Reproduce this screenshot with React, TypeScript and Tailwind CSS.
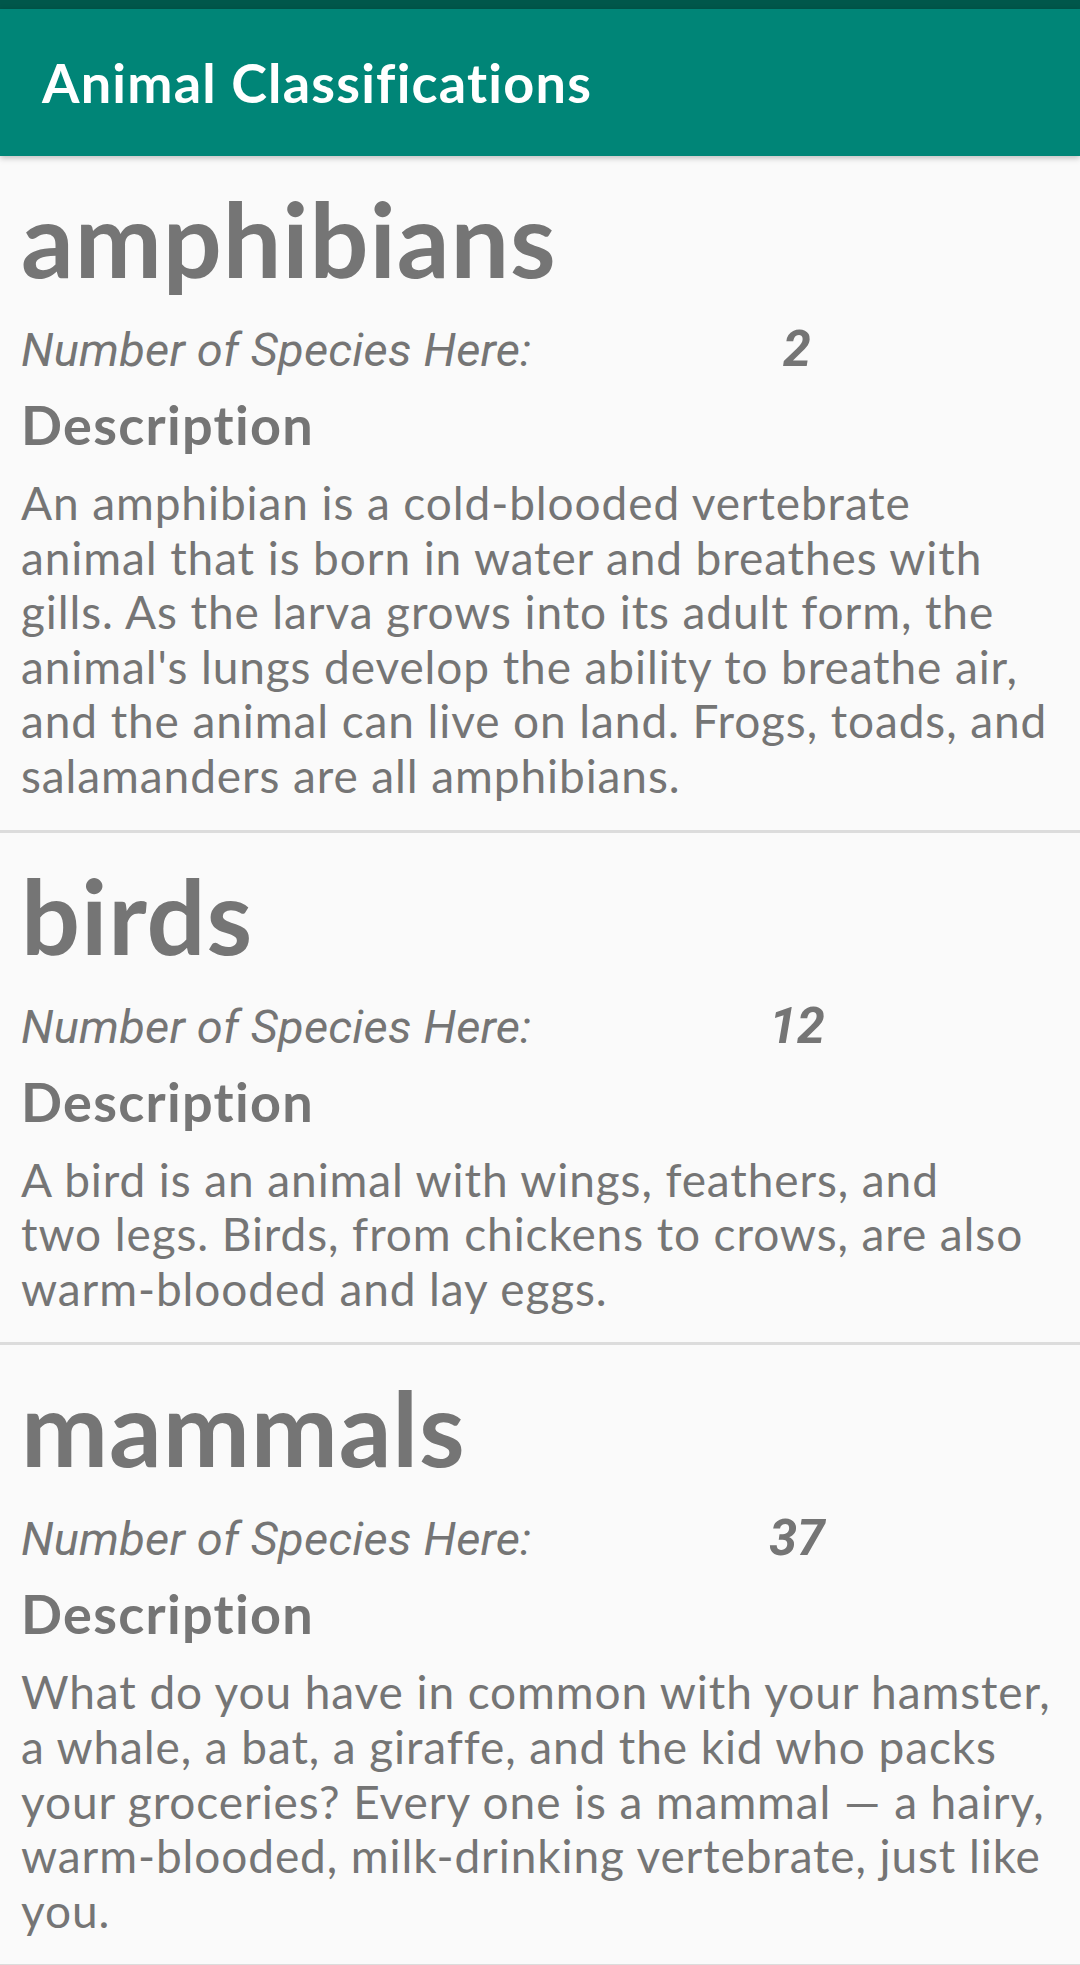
const animals = [
  {
    name: "amphibians",
    count: 2,
    description:
      "An amphibian is a cold-blooded vertebrate animal that is born in water and breathes with gills. As the larva grows into its adult form, the animal's lungs develop the ability to breathe air, and the animal can live on land. Frogs, toads, and salamanders are all amphibians.",
  },
  {
    name: "birds",
    count: 12,
    description:
      "A bird is an animal with wings, feathers, and\ntwo legs. Birds, from chickens to crows, are also warm-blooded and lay eggs.",
  },
  {
    name: "mammals",
    count: 37,
    description:
      "What do you have in common with your hamster, a whale, a bat, a giraffe, and the kid who packs your groceries? Every one is a mammal — a hairy, warm-blooded, milk-drinking vertebrate, just like you.",
  },
];

export default function App() {
  return (
    <main className="w-[1080px] h-[1965px] overflow-hidden bg-[#fafafa] flex flex-col font-['Lato',sans-serif] text-[#757575] [font-variant-ligatures:none]">
      {/* status bar strip */}
      <div className="h-[9px] bg-[#00574b] shrink-0" />

      {/* Toolbar */}
      <header className="h-[147px] shrink-0 bg-[#008577] flex items-center px-[42px] shadow-[0_2px_6px_rgba(0,0,0,0.25)] z-10">
        <h1 className="text-white text-[54px] font-bold leading-none tracking-[1.2px]">
          Animal Classifications
        </h1>
      </header>

      <div className="flex flex-col">
        {animals.map((a) => (
          <AnimalCard key={a.name} {...a} />
        ))}
      </div>
    </main>
  );
}

function AnimalCard({
  name,
  count,
  description,
}: {
  name: string;
  count: number;
  description: string;
}) {
  return (
    <section className="border-b-[3px] border-[#dcdcdc]">
      <div className="px-[21px] pt-[27px] pb-[26px]">
        <h2 className="text-[104px] font-bold leading-[110px] tracking-[0.9px]">
          {name}
        </h2>

        <div className="mt-[26px] flex items-baseline font-['Roboto',sans-serif] italic">
          <span className="w-[718px] text-[47px] leading-[60px] tracking-[0.2px]">
            Number of Species Here:
          </span>
          <span className="w-[116px] text-center text-[50px] font-bold leading-[60px]">
            {count}
          </span>
        </div>

        <h3 className="mt-[15px] text-[54px] font-bold leading-[60px] tracking-[1.3px]">
          Description
        </h3>

        <p className="mt-[21px] text-[46px] leading-[54.6px] tracking-[0.9px] pr-[3px] whitespace-pre-line">
          {description}
        </p>
      </div>
    </section>
  );
}
